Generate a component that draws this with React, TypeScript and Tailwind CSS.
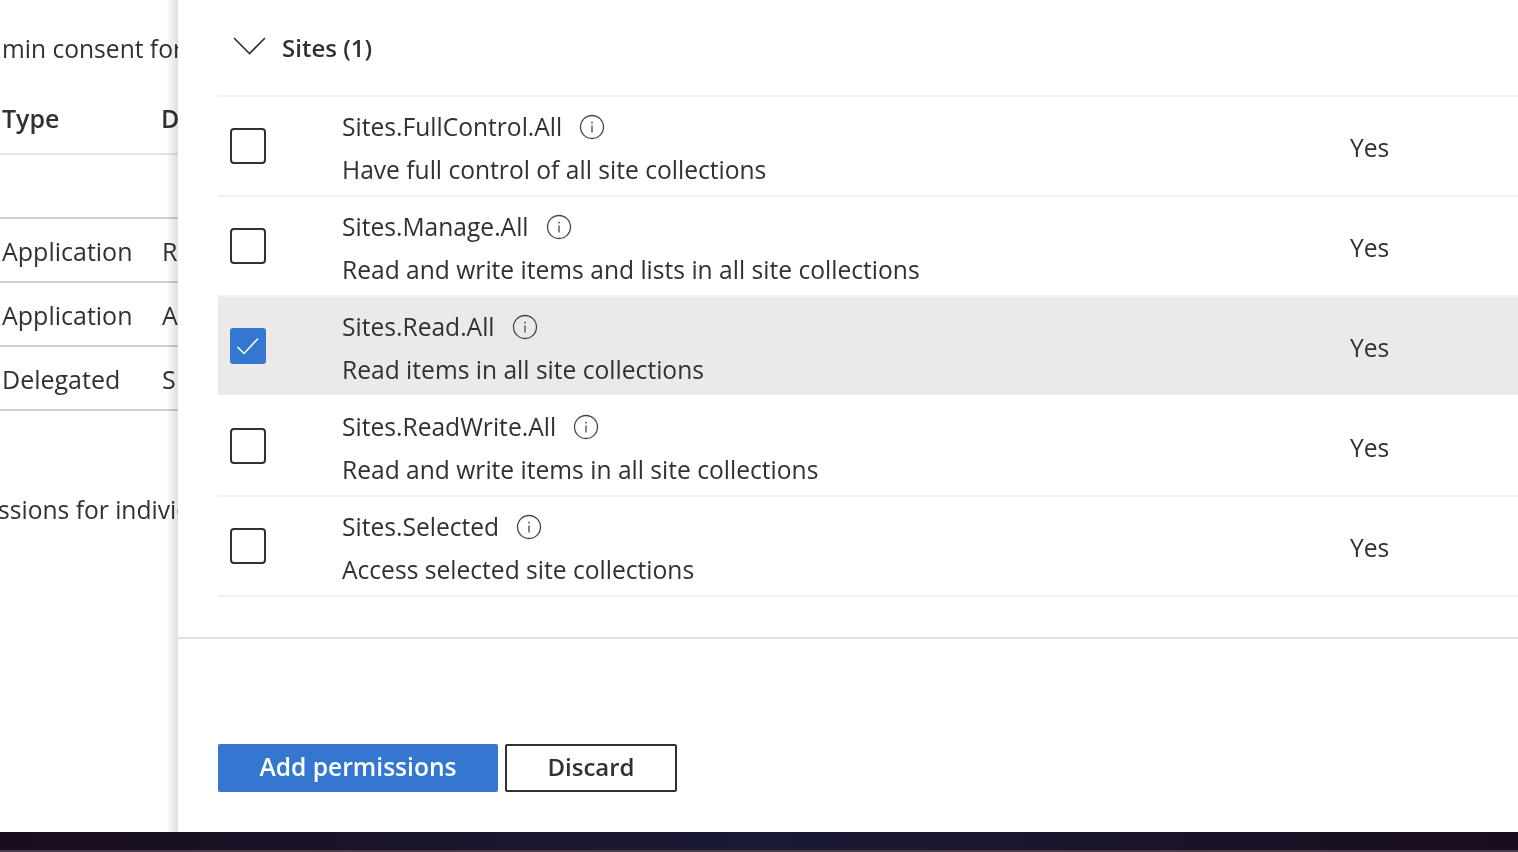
import React from 'react';

type Permission = {
  name: string;
  description: string;
  checked?: boolean;
};

const permissions: Permission[] = [
  { name: 'Sites.FullControl.All', description: 'Have full control of all site collections' },
  { name: 'Sites.Manage.All', description: 'Read and write items and lists in all site collections' },
  { name: 'Sites.Read.All', description: 'Read items in all site collections', checked: true },
  { name: 'Sites.ReadWrite.All', description: 'Read and write items in all site collections' },
  { name: 'Sites.Selected', description: 'Access selected site collections' },
];

const backgroundRows = [
  { type: 'Application', letter: 'R' },
  { type: 'Application', letter: 'A' },
  { type: 'Delegated', letter: 'S' },
];

const InfoIcon = () => (
  <svg width="26" height="26" viewBox="0 0 26 26" fill="none" className="shrink-0 text-[#484644]">
    <circle cx="13" cy="13" r="11.5" stroke="currentColor" strokeWidth="1.3" />
    <circle cx="13" cy="8.6" r="0.9" fill="currentColor" />
    <path d="M13 11.5V18.5" stroke="currentColor" strokeWidth="1.3" />
  </svg>
);

const Checkbox = ({ checked }: { checked?: boolean }) =>
  checked ? (
    <div className="flex h-9 w-9 items-center justify-center rounded-[3px] bg-[#3477d0]">
      <svg width="24" height="20" viewBox="0 0 24 20" fill="none">
        <path d="M1.5 11L8 17.5L22 2.5" stroke="white" strokeWidth="1.5" />
      </svg>
    </div>
  ) : (
    <div className="h-9 w-9 rounded-[4px] border-2 border-[#323130] bg-white" />
  );

const PermissionRow = ({ permission }: { permission: Permission }) => (
  <div
    className={`flex h-[100px] items-center border-b-2 ${
      permission.checked ? 'border-white bg-[#ebeae9]' : 'border-[#f3f2f1] bg-white'
    }`}
  >
    <div className="w-[124px] pl-3">
      <Checkbox checked={permission.checked} />
    </div>
    <div className="w-[1008px] pt-[14px]">
      <div className="flex h-[44px] items-center gap-[17px] pb-2">
        <span>{permission.name}</span>
        <InfoIcon />
      </div>
      <div className="h-[44px]">{permission.description}</div>
    </div>
    <div className="pt-1">Yes</div>
  </div>
);

export default function App() {
  return (
    <div className="flex h-[852px] w-[1518px] flex-col overflow-hidden bg-white font-['Open_Sans','Noto_Sans',sans-serif] text-[24.6px] leading-[34px] text-[#323130]">
      <div className="flex h-[832px]">
        {/* Page behind the side panel */}
        <div className="relative w-[178px] shrink-0 overflow-hidden whitespace-nowrap">
          <div className="h-[87px] pl-[2px] pt-8">min consent for</div>
          <div className="flex h-[68px] items-start border-b-2 border-[#e6e5e4] pl-[2px] pt-[14px] text-[25px] font-semibold">
            <span className="w-[159px] shrink-0">Type</span>
            <span>D</span>
          </div>
          <div className="h-16 border-b-2 border-[#d2d0ce]" />
          {backgroundRows.map((row, i) => (
            <div key={i} className="flex h-16 items-center border-b-2 border-[#d2d0ce] pl-[2px] pt-[2px] text-[25px]">
              <span className="w-[160px] shrink-0">{row.type}</span>
              <span>{row.letter}</span>
            </div>
          ))}
          <div className="-ml-[2px] mt-[82px]">ssions for individual</div>
          <div className="pointer-events-none absolute inset-y-0 right-0 w-3 bg-gradient-to-r from-transparent to-[#dedede] mix-blend-multiply" />
        </div>

        {/* Side panel */}
        <div className="flex min-w-0 flex-1 flex-col bg-white">
          <div className="ml-10 flex h-[97px] items-center gap-4 border-b-2 border-[#f3f2f1] pl-[15px] text-[24px] font-semibold">
            <svg width="33" height="20" viewBox="0 0 33 20" fill="none" className="mb-1">
              <path d="M1 2L16.5 17.5L32 2" stroke="#323130" strokeWidth="1.6" />
            </svg>
            <span>Sites (1)</span>
          </div>
          <div className="ml-10">
            {permissions.map((permission) => (
              <PermissionRow key={permission.name} permission={permission} />
            ))}
          </div>
          <div className="mt-10 h-[2px] bg-[#e1dfdd]" />
          <div className="ml-10 mt-[105px] flex gap-[7px] font-semibold">
            <button className="h-12 w-[280px] rounded-[2px] bg-[#3477d0] pb-[2px] text-white">Add permissions</button>
            <button className="h-12 w-[172px] rounded-[2px] border-2 border-[#323130] bg-white pb-[2px] text-[24px]">Discard</button>
          </div>
        </div>
      </div>

      {/* Desktop strip below the window */}
      <div className="h-5 border-b-2 border-[#4a3d4c] bg-gradient-to-r from-[#1a0d1f] via-[#1a1a35] to-[#1a0d1f]" />
    </div>
  );
}
